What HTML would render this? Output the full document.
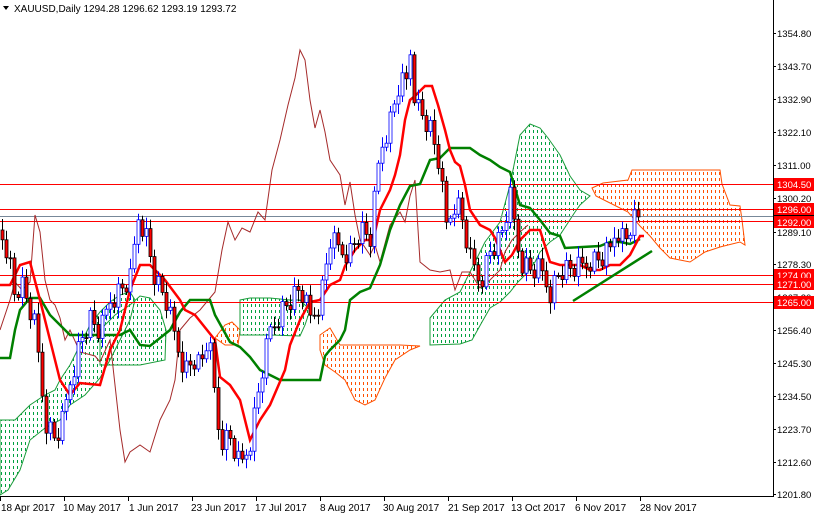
<!DOCTYPE html>
<html><head><meta charset="utf-8"><style>
html,body{margin:0;padding:0;background:#fff;}
svg{display:block;font-family:"Liberation Sans",sans-serif;}
</style></head><body>
<svg id="s" width="814" height="514" viewBox="0 0 814 514" xmlns="http://www.w3.org/2000/svg">
<defs>
<clipPath id="k1"><polygon points="0,420 15,420 30,405 45,395 55,390 60,380 70,365 80,345 90,325 100,312 110,302 120,295 130,292 135,300 130,320 120,340 110,360 100,378 85,395 70,405 60,420 45,428 30,440 20,470 8,490 0,495"/></clipPath>
<clipPath id="k2"><polygon points="100,330 115,315 130,305 140,296 150,298 160,310 166,330 165,360 140,365 120,365 100,365"/></clipPath>
<clipPath id="k3"><polygon points="215,338 225,325 232,322 240,330 238,345 225,345"/></clipPath>
<clipPath id="k4"><polygon points="240,300 250,298 270,298 290,300 300,300 310,310 305,325 300,336 270,335 240,335"/></clipPath>
<clipPath id="k5"><polygon points="320,335 330,328 340,345 360,345 380,345 400,345 420,346 410,350 395,360 385,378 375,400 365,405 355,400 345,380 335,372 325,365 320,350"/></clipPath>
<clipPath id="k6"><polygon points="430,318 445,300 460,292 470,272 485,242 500,222 510,185 520,135 530,124 540,128 548,138 560,155 570,176 580,190 590,196 580,205 575,212 560,235 550,242 540,252 535,262 528,272 518,282 510,292 500,302 490,308 482,322 472,340 460,344 430,345"/></clipPath>
<clipPath id="k7"><polygon points="592,188 603,183 628,180 632,170 720,170 722,184 730,205 740,206 742,220 745,245 740,242 720,247 705,252 690,262 670,258 660,248 650,236 640,226 628,212 610,203 596,196"/></clipPath>
</defs>
<rect width="814" height="514" fill="#fff"/>
<g id="clouds"></g>
<g stroke-width="1" fill="none">
<polygon stroke="#1a9c3a" points="0,420 15,420 30,405 45,395 55,390 60,380 70,365 80,345 90,325 100,312 110,302 120,295 130,292 135,300 130,320 120,340 110,360 100,378 85,395 70,405 60,420 45,428 30,440 20,470 8,490 0,495"/>
<polygon stroke="#1a9c3a" points="100,330 115,315 130,305 140,296 150,298 160,310 166,330 165,360 140,365 120,365 100,365"/>
<polygon stroke="#ff5000" points="215,338 225,325 232,322 240,330 238,345 225,345"/>
<polygon stroke="#1a9c3a" points="240,300 250,298 270,298 290,300 300,300 310,310 305,325 300,336 270,335 240,335"/>
<polygon stroke="#ff5000" points="320,335 330,328 340,345 360,345 380,345 400,345 420,346 410,350 395,360 385,378 375,400 365,405 355,400 345,380 335,372 325,365 320,350"/>
<polygon stroke="#1a9c3a" points="430,318 445,300 460,292 470,272 485,242 500,222 510,185 520,135 530,124 540,128 548,138 560,155 570,176 580,190 590,196 580,205 575,212 560,235 550,242 540,252 535,262 528,272 518,282 510,292 500,302 490,308 482,322 472,340 460,344 430,345"/>
<polygon stroke="#ff5000" points="592,188 603,183 628,180 632,170 720,170 722,184 730,205 740,206 742,220 745,245 740,242 720,247 705,252 690,262 670,258 660,248 650,236 640,226 628,212 610,203 596,196"/>
</g>
<g stroke="#ff0000" stroke-width="1">
<line x1="0" y1="184.5" x2="773" y2="184.5"/>
<line x1="0" y1="209.5" x2="773" y2="209.5"/>
<line x1="0" y1="221.5" x2="773" y2="221.5"/>
<line x1="0" y1="275.5" x2="773" y2="275.5"/>
<line x1="0" y1="284.5" x2="773" y2="284.5"/>
<line x1="0" y1="302.5" x2="773" y2="302.5"/>
</g>
<line x1="0" y1="216.5" x2="814" y2="216.5" stroke="#778899" stroke-width="1"/>
<polyline fill="none" stroke="#a52a2a" stroke-width="1" points="0,330 10,300 15,282 22,290 30,282 35,215 40,232 45,280 50,300 55,305 60,318 65,340 70,330 80,352 95,356 100,362 110,340 120,430 125,462 130,452 140,445 150,452 160,420 170,400 175,380 180,330 190,318 200,310 215,292 222,250 228,222 235,240 242,228 250,232 258,212 265,220 272,170 280,140 288,105 295,78 300,50 305,60 310,100 315,128 320,110 325,132 330,160 340,175 345,205 350,182 355,215 360,240 370,255 375,245 380,262 390,225 400,212 405,222 410,196 415,180 420,262 430,270 440,272 450,270 455,290 462,272 470,272 480,288 490,280 500,270 505,252 512,240 520,232 528,225"/>
<polyline fill="none" stroke="#008000" stroke-width="2.5" points="0,358 10,358 15,330 20,310 30,298 40,298 50,315 60,325 70,335 80,335 120,335 130,330 140,345 150,346 170,330 180,312 190,300 210,300 215,315 230,342 240,347 250,357 260,370 270,375 280,380 320,380 325,356 330,350 340,340 345,330 350,300 360,292 370,288 380,265 390,230 400,205 410,186 420,184 430,160 440,158 450,148 470,148 480,155 490,160 500,167 510,172 520,205 530,208 540,220 550,233 560,236 565,248 600,246 610,242 620,242 630,244 640,239"/>
<polyline fill="none" stroke="#ff0000" stroke-width="2.5" points="0,285 10,285 20,265 30,262 40,300 50,340 60,380 70,395 80,383 100,385 110,350 120,330 130,290 140,265 150,265 165,280 180,300 185,310 195,315 215,340 220,377 230,385 240,400 250,440 260,420 270,405 285,370 290,345 300,320 310,302 320,300 330,285 340,280 345,266 355,250 365,240 370,240 375,232 380,210 390,190 395,175 400,155 405,120 410,100 415,96 425,86 432,86 438,105 445,130 450,150 455,162 460,166 465,185 470,210 480,225 490,230 495,238 500,250 505,262 512,255 520,240 530,230 540,230 550,262 560,265 580,265 590,270 600,270 610,265 620,265 630,255 640,236 644,236"/>
<g id="c"></g>
<line x1="573" y1="301" x2="652" y2="251" stroke="#008000" stroke-width="2.5"/>
<line x1="773.5" y1="0" x2="773.5" y2="497" stroke="#000"/>
<line x1="0" y1="496.5" x2="774" y2="496.5" stroke="#000"/>
<g font-size="9.5" fill="#000">
<text x="777" y="37">1354.80</text><text x="777" y="70">1343.70</text><text x="777" y="103">1332.90</text>
<text x="777" y="136">1322.10</text><text x="777" y="169">1311.00</text><text x="777" y="202">1300.20</text>
<text x="777" y="236">1289.10</text><text x="777" y="268">1278.30</text><text x="777" y="301">1267.20</text>
<text x="777" y="334">1256.40</text><text x="777" y="367">1245.30</text><text x="777" y="400">1234.50</text>
<text x="777" y="433">1223.70</text><text x="777" y="466">1212.60</text><text x="777" y="498">1201.80</text>
</g>
<g stroke="#000"><line x1="773" y1="33.5" x2="776" y2="33.5"/><line x1="773" y1="66.5" x2="776" y2="66.5"/><line x1="773" y1="99.5" x2="776" y2="99.5"/><line x1="773" y1="132.5" x2="776" y2="132.5"/><line x1="773" y1="165.5" x2="776" y2="165.5"/><line x1="773" y1="198.5" x2="776" y2="198.5"/><line x1="773" y1="232.5" x2="776" y2="232.5"/><line x1="773" y1="264.5" x2="776" y2="264.5"/><line x1="773" y1="330.5" x2="776" y2="330.5"/><line x1="773" y1="363.5" x2="776" y2="363.5"/><line x1="773" y1="396.5" x2="776" y2="396.5"/><line x1="773" y1="429.5" x2="776" y2="429.5"/><line x1="773" y1="462.5" x2="776" y2="462.5"/><line x1="773" y1="494.5" x2="776" y2="494.5"/></g>
<g font-size="9.5" fill="#fff">
<rect x="774" y="178" width="40" height="13" fill="#ff0000"/><text x="777" y="188">1304.50</text>
<rect x="774" y="203" width="40" height="12" fill="#ff0000"/><text x="777" y="213">1296.00</text>
<rect x="774" y="215" width="40" height="1.5" fill="#000"/>
<rect x="774" y="216" width="40" height="12" fill="#ff0000"/><text x="777" y="226">1292.00</text>
<rect x="774" y="269" width="40" height="12" fill="#ff0000"/><text x="777" y="279">1274.00</text>
<rect x="774" y="278" width="40" height="12" fill="#ff0000"/><text x="777" y="288">1271.00</text>
<rect x="774" y="296" width="40" height="13" fill="#ff0000"/><text x="777" y="306">1265.00</text>
</g>
<g font-size="10" fill="#000">
<text x="1" y="511">18 Apr 2017</text><text x="63" y="511">10 May 2017</text><text x="129" y="511">1 Jun 2017</text>
<text x="191" y="511">23 Jun 2017</text><text x="255" y="511">17 Jul 2017</text><text x="320" y="511">8 Aug 2017</text>
<text x="383" y="511">30 Aug 2017</text><text x="448" y="511">21 Sep 2017</text><text x="511" y="511">13 Oct 2017</text>
<text x="575" y="511">6 Nov 2017</text><text x="640" y="511">28 Nov 2017</text>
</g>
<g stroke="#000"><line x1="0.5" y1="497" x2="0.5" y2="501"/><line x1="64.5" y1="497" x2="64.5" y2="501"/><line x1="128.5" y1="497" x2="128.5" y2="501"/><line x1="192.5" y1="497" x2="192.5" y2="501"/><line x1="256.5" y1="497" x2="256.5" y2="501"/><line x1="320.5" y1="497" x2="320.5" y2="501"/><line x1="384.5" y1="497" x2="384.5" y2="501"/><line x1="448.5" y1="497" x2="448.5" y2="501"/><line x1="512.5" y1="497" x2="512.5" y2="501"/><line x1="576.5" y1="497" x2="576.5" y2="501"/><line x1="640.5" y1="497" x2="640.5" y2="501"/></g>
<polygon points="3,6 9,6 6,10" fill="#000"/>
<text x="14" y="12" font-size="10" fill="#000">XAUUSD,Daily  1294.28 1296.62 1293.19 1293.72</text>
</svg>
<script>
(function(){
var cl=[["k1","#00a040",0,140],["k2","#00a040",100,170],["k3","#ff5000",212,244],["k4","#00a040",238,312],["k5","#ff5000",318,422],["k6","#00a040",428,592],["k7","#ff5000",590,748]];
var cs='';
cl.forEach(function(c){cs+='<g clip-path="url(#'+c[0]+')" stroke="'+c[1]+'" stroke-width="1" stroke-dasharray="3 3" shape-rendering="crispEdges">';
for(var x=c[2]+1.5;x<c[3];x+=4){cs+='<line x1="'+x+'" y1="100" x2="'+x+'" y2="500"/>';}cs+='</g>';});
document.getElementById('clouds').innerHTML=cs;
var k=[[0,230],[8,250],[15,300],[20,280],[35,330],[45,420],[55,440],[63,420],[70,380],[80,340],[90,320],[100,335],[110,300],[120,290],[130,280],[138,215],[145,230],[155,280],[165,300],[175,340],[185,370],[195,360],[200,370],[210,330],[215,410],[220,440],[230,440],[240,470],[250,440],[260,380],[270,330],[280,310],[290,300],[300,290],[310,320],[320,300],[330,240],[340,250],[350,250],[360,230],[370,240],[380,150],[390,120],[400,80],[405,90],[410,50],[415,100],[420,110],[425,120],[430,130],[440,170],[445,230],[455,200],[460,210],[470,260],[480,280],[490,250],[500,240],[510,200],[520,260],[530,270],[540,270],[550,290],[560,270],[580,270],[590,260],[600,260],[610,250],[616,225],[625,240],[632,220],[640,218]];
function f(x){for(var i=1;i<k.length;i++){if(x<=k[i][0]){var a=k[i-1],b=k[i];return a[1]+(b[1]-a[1])*(x-a[0])/(b[0]-a[0]);}}return k[k.length-1][1];}
var s='',prev=f(0);
for(var x=2;x<=640;x+=4){var c=f(x)+((x*7919)%17-8)*1.6;var o=prev;var hi=Math.min(o,c)-3-((x*31)%9),lo=Math.max(o,c)+3+((x*17)%9);
var bull=c<o;var top=Math.min(o,c),h=Math.max(1,Math.abs(c-o));
s+='<line x1="'+(x+0.5)+'" y1="'+hi+'" x2="'+(x+0.5)+'" y2="'+lo+'" stroke="'+(bull?'#0000ff':'#000')+'"/>';
s+='<rect x="'+(x-1)+'" y="'+top+'" width="3" height="'+h+'" fill="'+(bull?'#fff':'#ff0000')+'" stroke="'+(bull?'#0000ff':'#000')+'" stroke-width="0.8"/>';
prev=c;}
document.getElementById('c').innerHTML=s;
})();
</script>
</body></html>
